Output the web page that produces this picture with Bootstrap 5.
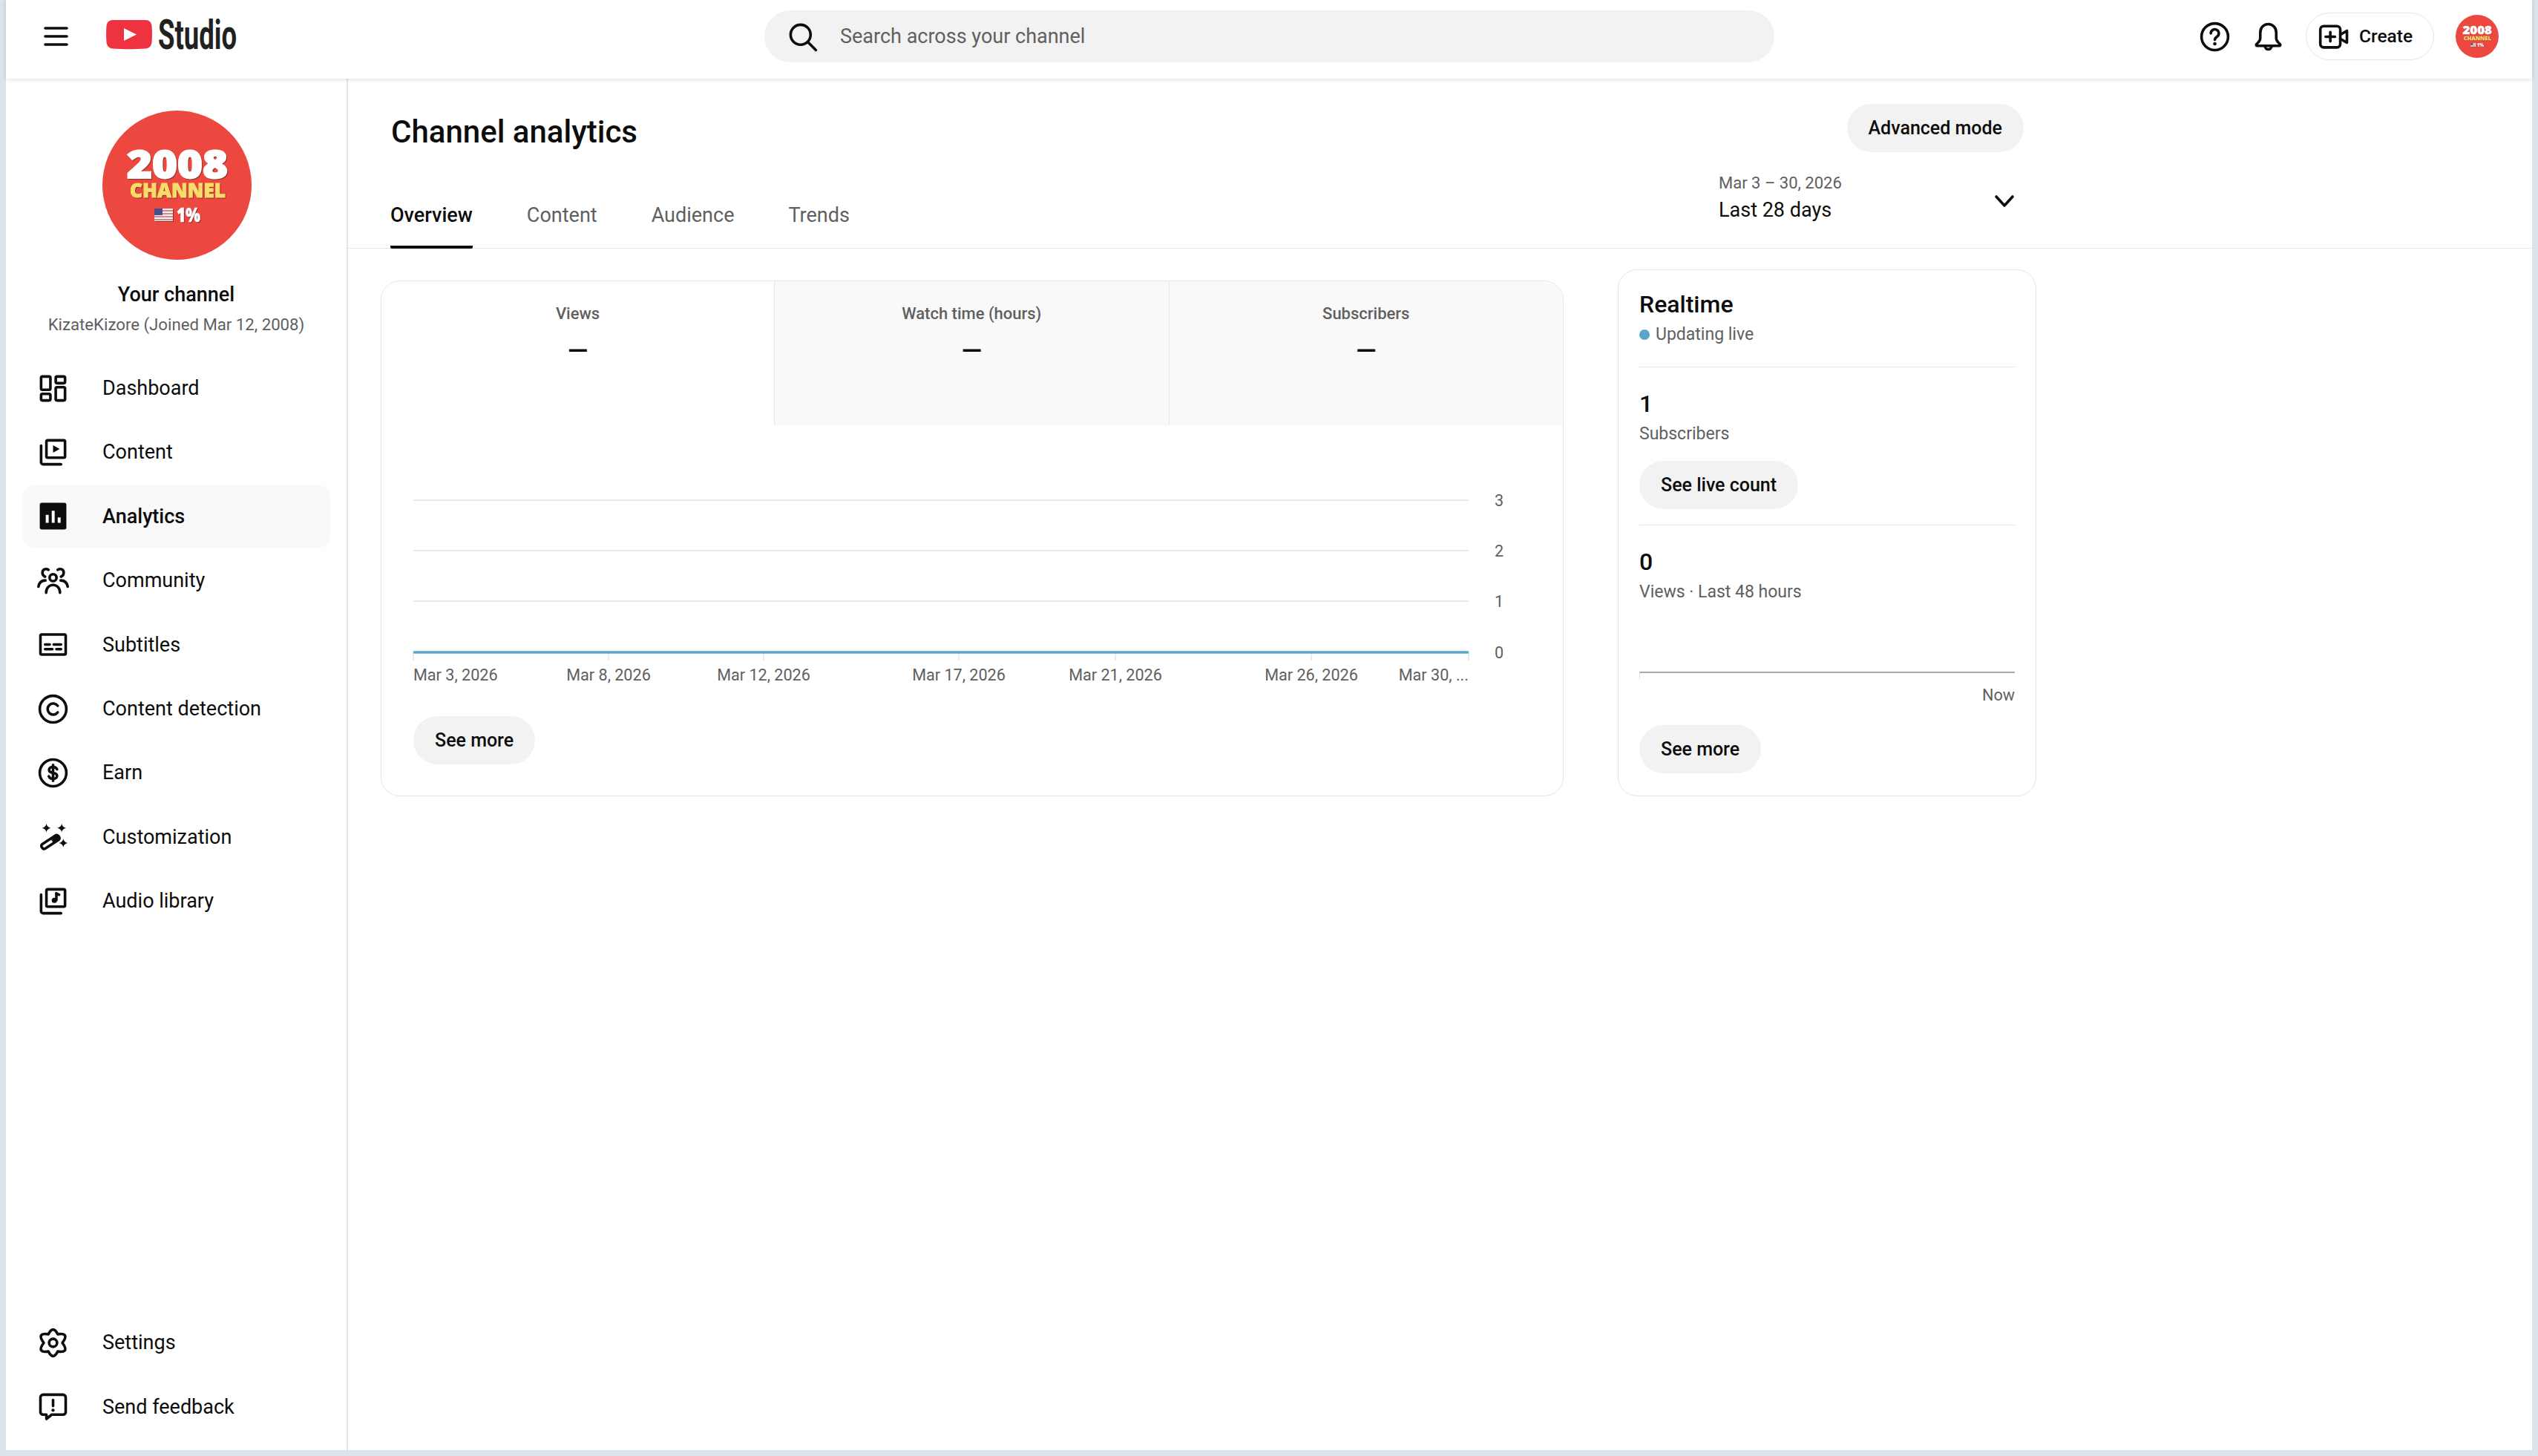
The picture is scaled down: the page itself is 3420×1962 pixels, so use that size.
<!DOCTYPE html>
<html lang="en">
<head>
    <meta charset="UTF-8">
    <meta name="viewport" content="width=device-width, initial-scale=1.0">
    <title>Channel analytics - YouTube Studio</title>
    <link href="https://cdn.jsdelivr.net/npm/bootstrap@5.3.0/dist/css/bootstrap.min.css" rel="stylesheet">
    <style>
        html, body {
            height: 100%;
        }
        body {
            background-color: #dbe3eb;
            padding: 0 8px 8px;
            font-family: Roboto, "Liberation Sans", sans-serif;
            color: #0d0d0d;
            overflow: hidden;
        }
        .app-shell {
            height: 100%;
            background: #fff;
            display: flex;
            flex-direction: column;
        }
        .icon {
            width: 43px;
            height: 43px;
            flex: none;
            fill: none;
            stroke: #0d0d0d;
            stroke-width: 2;
            stroke-linecap: round;
            stroke-linejoin: round;
        }
        .solid {
            fill: #0d0d0d;
            stroke: none;
        }

        /* top bar */
        .top-bar {
            height: 106px;
            flex: none;
            padding: 0 45px 8px 51px;
            background: #fff;
            box-shadow: 0 1px 6px rgba(0,0,0,.14);
            position: relative;
            z-index: 2;
        }
        .burger {
            width: 33px;
            height: 26px;
            flex: none;
            stroke: #0d0d0d;
            stroke-width: 3.6;
            stroke-linecap: round;
        }
        .yt-logo {
            width: 240px;
            height: 50px;
            margin-left: 51px;
            flex: none;
            overflow: visible;
        }
        .logo-word {
            font-family: Roboto, sans-serif;
            font-weight: 700;
            font-size: 55px;
            fill: #212121;
        }
        .search-box {
            width: 1361px;
            height: 70px;
            background: #f2f2f2;
            border-radius: 35px;
            margin-left: 647px;
            padding-left: 30px;
            flex: none;
        }
        .search-box .form-control {
            background: transparent;
            border: 0;
            box-shadow: none;
            font-size: 27px;
            padding: 0 0 0 29px;
            color: #606060;
        }
        .search-box .form-control::placeholder {
            color: #606060;
        }
        .head-tools {
            margin-left: auto;
            gap: 29px;
        }
        .create-pill {
            height: 64px;
            width: 173px;
            border: 1.5px solid #e5e5e5;
            border-radius: 32px;
            padding: 0 0 0 16px;
            font-size: 24.5px;
            font-weight: 500;
            color: #0d0d0d;
            gap: 12px;
        }
        .head-avatar {
            width: 58px;
            height: 58px;
            flex: none;
        }

        /* sidebar */
        .app-body {
            flex: 1;
            min-height: 0;
        }
        .side-nav {
            width: 461px;
            flex: none;
            border-right: 2px solid #e5e5e5;
            padding: 43px 22px 15px;
        }
        .side-avatar {
            width: 201px;
            height: 201px;
            display: block;
            flex: none;
            margin-left: calc(50% - 99.5px);
        }
        .side-name {
            font-size: 27px;
            font-weight: 500;
            line-height: 36px;
            margin-top: 29px;
        }
        .side-sub {
            font-size: 22.2px;
            line-height: 30px;
            color: #606060;
            margin: 7px -10px 28px;
            white-space: nowrap;
        }
        .side-nav .nav-link {
            height: 86.4px;
            padding: 0 0 0 20px;
            border-radius: 18px;
            color: #0d0d0d;
            font-size: 27px;
            gap: 45px;
        }
        .side-nav .nav-link.active {
            background: #f9f9f9;
            font-weight: 500;
        }

        /* main */
        .main-pane {
            flex: 1;
            min-width: 0;
        }
        .page-head {
            height: 229px;
            padding: 34px 0 0 57px;
            border-bottom: 1.5px solid #e5e5e5;
        }
        .head-inner {
            width: 2201px;
        }
        .title-row {
            height: 92px;
        }
        .page-title {
            font-size: 42px;
            font-weight: 500;
            line-height: 72px;
            margin: 2px 0 0 1px;
        }
        .soft-pill {
            height: 65px;
            padding: 0 29px;
            background: #f2f2f2;
            border: 0;
            border-radius: 33px;
            font-size: 25px;
            font-weight: 500;
            color: #0d0d0d;
            display: inline-flex;
            align-items: center;
        }
        .tab-row {
            height: 103px;
        }
        .page-tabs {
            gap: 73px;
        }
        .page-tabs .nav-link {
            padding: 40px 0 22px 0;
            font-size: 27px;
            line-height: 36px;
            color: #606060;
            border-bottom: 4px solid transparent;
        }
        .page-tabs .nav-link.active {
            color: #0d0d0d;
            font-weight: 500;
            border-bottom-color: #0d0d0d;
            border-radius: 0 0 2px 2px;
        }
        .date-pick {
            width: 411px;
            padding-right: 12px;
        }
        .date-range {
            font-size: 22px;
            line-height: 30px;
            color: #606060;
        }
        .date-label {
            font-size: 27px;
            line-height: 36px;
            margin-top: 3px;
        }
        .date-chevron {
            width: 28px;
            height: 20px;
            fill: none;
            stroke: #0d0d0d;
            stroke-width: 3.6;
            stroke-linecap: round;
            stroke-linejoin: round;
            margin-bottom: 20px;
        }
        .page-cards {
            padding-left: 44px;
        }
        .panel {
            border: 1.5px solid #e5e5e5;
            border-radius: 26px;
            background: #fff;
            overflow: hidden;
            flex: none;
        }
        .views-panel {
            width: 1594px;
            height: 695px;
            margin-top: 43px;
        }
        .metric-tab {
            flex: 1;
            height: 194px;
            padding-top: 29px;
            text-align: center;
            background: #f9f9f9;
            border-left: 1.5px solid #e5e5e5;
        }
        .metric-tab.on {
            flex: none;
            width: 529px;
            background: #fff;
            border-left: 0;
        }
        .metric-name {
            font-size: 22px;
            font-weight: 500;
            line-height: 30px;
            color: #606060;
        }
        .metric-value {
            font-size: 36px;
            font-weight: 500;
            line-height: 40px;
            margin-top: 15px;
        }
        .views-chart {
            display: block;
            width: 1591px;
            height: 385px;
        }
        .views-chart text {
            font-family: Roboto, sans-serif;
            font-size: 21.6px;
            fill: #606060;
        }
        .chart-foot {
            margin: 7px 0 0 43px;
        }
        .realtime-panel {
            width: 564px;
            height: 710px;
            margin: 28px 0 0 73px;
            padding: 26px 28px 0;
        }
        .rt-title {
            font-size: 32px;
            font-weight: 500;
            line-height: 40px;
        }
        .rt-sub {
            font-size: 23px;
            line-height: 30px;
            color: #606060;
            margin-top: 6px;
        }
        .live-dot {
            width: 14px;
            height: 14px;
            border-radius: 50%;
            background: #5aa7cc;
            margin-right: 8px;
        }
        .rt-rule {
            border-top: 1.5px solid #e5e5e5;
        }
        .rt-first {
            margin-top: 28px;
        }
        .rt-second {
            margin-top: 21px;
        }
        .rt-btn {
            margin-top: 21px;
        }
        .rt-more {
            margin-top: 25px;
        }
        .rt-count {
            font-size: 32px;
            font-weight: 500;
            line-height: 40px;
            margin-top: 29px;
        }
        .spark-axis {
            height: 10px;
            margin-top: 92px;
            border-top: 2px solid #a8a8a8;
            border-left: 1px solid #ddd;
        }
        .spark-now {
            font-size: 21.6px;
            line-height: 30px;
            color: #606060;
            text-align: right;
            margin-top: 7px;
        }

        /* channel picture */
        .pic-year {
            font-family: "Open Sans", sans-serif;
            font-weight: 800;
            font-size: 52px;
            fill: #fff;
            stroke: #fff;
            stroke-width: 2;
        }
        .pic-word {
            font-family: "Open Sans", sans-serif;
            font-weight: 800;
            font-size: 26px;
            fill: #f8dc68;
            stroke: #f8dc68;
            stroke-width: 1;
        }
        .pic-pct {
            font-family: "Open Sans", sans-serif;
            font-weight: 800;
            font-size: 26px;
            fill: #fff;
            stroke: #fff;
            stroke-width: .6;
        }
        .pic-shade {
            filter: drop-shadow(1.2px 1.4px 0 #97302b);
        }
    </style>
</head>
<body>
    <div class="app-shell">
        <header class="top-bar d-flex align-items-center">
            <svg class="burger" viewBox="0 0 33 26"><path d="M2 2h29M2 13h29M2 24h29"/></svg>
            <svg class="yt-logo" viewBox="0 0 240 50">
                <path d="M9 3h44c5 0 8 3 8.500 8 .6 7 .6 15 0 22-.5 5-3.500 8-8.500 8.500-14 1-30 1-44 0C4 41 1 38 .5 33c-.6-7-.6-15 0-22C1 6 4 3 9 3z" fill="#ee3240"/>
                <path d="M24 14l17 8.500-17 8.500z" fill="#fff"/>
                <text class="logo-word" x="70" y="42" textLength="106" lengthAdjust="spacingAndGlyphs">Studio</text>
            </svg>
            <form class="search-box d-flex align-items-center">
                <svg class="icon" viewBox="0 0 24 24"><circle cx="10.500" cy="10.500" r="7.500"/><path d="M16 16l6 6"/></svg>
                <input class="form-control" type="text" placeholder="Search across your channel">
            </form>
            <div class="head-tools d-flex align-items-center">
                <svg class="icon" viewBox="0 0 24 24"><circle cx="12" cy="12" r="10"/><path d="M9 9.500a3 3 0 1 1 4.600 2.500c-1 .7-1.600 1.200-1.600 2.300"/><circle class="solid" cx="12" cy="17.300" r="1.300"/></svg>
                <svg class="icon" viewBox="0 0 24 24"><path d="M12 2.500c-3.500 0-6 2.800-6 6.500v4c0 1.500-1 3-2.800 4.600-.5.500-.2 1.200.5 1.200h16.600c.7 0 1-.7.5-1.200C18.900 16 18 14.500 18 13V9c0-3.700-2.500-6.500-6-6.500z"/><path d="M9.500 19a2.500 2.500 0 0 0 5 0"/></svg>
                <button class="btn create-pill d-flex align-items-center" type="button">
                    <svg class="icon" viewBox="0 0 24 24"><rect x="1.500" y="4" width="15" height="16" rx="2.500"/><path d="M16.500 10.500l5-3v9l-5-3M9 8.500v7M5.500 12h7"/></svg>
                    Create
                </button>
                <svg class="head-avatar" viewBox="0 0 201 201">
                    <circle cx="100.500" cy="100.500" r="100.500" fill="#ec483f"/>
                    <g class="pic-shade">
                        <text class="pic-year" x="33" y="91" textLength="136" lengthAdjust="spacingAndGlyphs">2008</text>
                        <text class="pic-word" x="37" y="117" textLength="129" lengthAdjust="spacingAndGlyphs">CHANNEL</text>
                        <text class="pic-pct" x="100" y="150" textLength="32" lengthAdjust="spacingAndGlyphs">1%</text>
                        <rect x="70" y="132" width="25" height="17" fill="#f4eeee"/>
                        <path d="M70 135h25M70 139h25M70 143h25M70 147h25" stroke="#c66a70" stroke-width="1.600"/>
                        <rect x="70" y="132" width="11" height="9" fill="#47508a"/>
                    </g>
                </svg>
            </div>
        </header>

        <div class="app-body d-flex">
            <aside class="side-nav d-flex flex-column">
                <svg class="side-avatar" viewBox="0 0 201 201">
                    <circle cx="100.500" cy="100.500" r="100.500" fill="#ec483f"/>
                    <g class="pic-shade">
                        <text class="pic-year" x="33" y="91" textLength="136" lengthAdjust="spacingAndGlyphs">2008</text>
                        <text class="pic-word" x="37" y="117" textLength="129" lengthAdjust="spacingAndGlyphs">CHANNEL</text>
                        <text class="pic-pct" x="100" y="150" textLength="32" lengthAdjust="spacingAndGlyphs">1%</text>
                        <rect x="70" y="132" width="25" height="17" fill="#f4eeee"/>
                        <path d="M70 135h25M70 139h25M70 143h25M70 147h25" stroke="#c66a70" stroke-width="1.600"/>
                        <rect x="70" y="132" width="11" height="9" fill="#47508a"/>
                    </g>
                </svg>
                <div class="text-center side-name">Your channel</div>
                <div class="text-center side-sub">KizateKizore (Joined Mar 12, 2008)</div>
                <nav class="nav flex-column flex-grow-1">
                    <a class="nav-link d-flex align-items-center" href="#">
                        <svg class="icon" viewBox="0 0 24 24"><rect x="3" y="3" width="7" height="10" rx="1"/><rect x="3" y="16" width="7" height="5" rx="1"/><rect x="14" y="3" width="7" height="5" rx="1"/><rect x="14" y="11" width="7" height="10" rx="1"/></svg>
                        Dashboard
                    </a>
                    <a class="nav-link d-flex align-items-center" href="#">
                        <svg class="icon" viewBox="0 0 24 24"><rect x="7" y="3" width="14" height="13" rx="1"/><path d="M3 7v12.500a1.500 1.500 0 0 0 1.500 1.500H18"/><path class="solid" d="M12 6.700l5 2.800-5 2.800z"/></svg>
                        Content
                    </a>
                    <a class="nav-link active d-flex align-items-center" href="#">
                        <svg class="icon" viewBox="0 0 24 24"><rect class="solid" x="2" y="2" width="20" height="20" rx="1.500"/><path fill="#fff" stroke="none" d="M6.500 11h2.200v6H6.500zM11 8h2.200v9H11zM15.500 13h2.200v4h-2.200z"/></svg>
                        Analytics
                    </a>
                    <a class="nav-link d-flex align-items-center" href="#">
                        <svg class="icon" viewBox="0 0 24 24"><circle cx="12" cy="9.700" r="2.600"/><path d="M6.800 21c0-3.400 2.200-5.800 5.200-5.800s5.200 2.400 5.200 5.800"/><path d="M8.500 3.800C6.500 2.500 4 3.500 4 6c0 1.500.9 2.500 2 3M1 16.500c.5-3 2.500-4.700 5.300-4.700"/><path d="M15.500 3.800C17.500 2.500 20 3.500 20 6c0 1.500-.9 2.500-2 3M23 16.500c-.5-3-2.500-4.700-5.300-4.700"/></svg>
                        Community
                    </a>
                    <a class="nav-link d-flex align-items-center" href="#">
                        <svg class="icon" viewBox="0 0 24 24"><rect x="2.500" y="4.500" width="19" height="15" rx="1"/><path d="M6 12h3.500M12.500 12H18M6 15.500h5.500M14.500 15.500H18"/></svg>
                        Subtitles
                    </a>
                    <a class="nav-link d-flex align-items-center" href="#">
                        <svg class="icon" viewBox="0 0 24 24"><circle cx="12" cy="12" r="10"/><path d="M15.500 9.500a4.200 4.200 0 1 0 0 5"/></svg>
                        Content detection
                    </a>
                    <a class="nav-link d-flex align-items-center" href="#">
                        <svg class="icon" viewBox="0 0 24 24"><circle cx="12" cy="12" r="10"/><path d="M15 9.300C14.500 8 13.300 7.500 12 7.500c-1.700 0-3 .9-3 2.300s1.200 1.900 3 2.200 3 .9 3 2.200-1.300 2.300-3 2.300c-1.500 0-2.700-.7-3.200-1.900M12 6v12"/></svg>
                        Earn
                    </a>
                    <a class="nav-link d-flex align-items-center" href="#">
                        <svg class="icon" viewBox="0 0 24 24"><g transform="rotate(-33 10 16)"><rect x="2.500" y="14" width="15" height="4" rx="1.500"/><rect class="solid" x="11.500" y="14" width="6" height="4"/></g><path class="solid" d="M7 2.300q.5 2.700 3.300 3.200-2.800.5-3.300 3.200-.5-2.700-3.300-3.200 2.800-.5 3.300-3.200zM18.500 2.300q.5 2.700 3.300 3.200-2.800.5-3.300 3.200-.5-2.700-3.300-3.200 2.800-.5 3.300-3.200zM19.700 13.500q.5 2.700 3.300 3.200-2.800.5-3.300 3.200-.5-2.700-3.300-3.200 2.800-.5 3.300-3.200z"/></svg>
                        Customization
                    </a>
                    <a class="nav-link d-flex align-items-center" href="#">
                        <svg class="icon" viewBox="0 0 24 24"><rect x="7" y="3" width="14" height="13" rx="1"/><path d="M3 7v12.500a1.500 1.500 0 0 0 1.500 1.500H18"/><path d="M14.500 6v5"/><circle class="solid" cx="13" cy="11.300" r="2"/><path d="M14.500 6.200l2 .8"/></svg>
                        Audio library
                    </a>
                    <a class="nav-link d-flex align-items-center mt-auto" href="#">
                        <svg class="icon" viewBox="0 0 24 24"><path d="M8.500 5.500Q12-1.500 15.500 5.500 24.750 4.250 19 12 24.750 19.750 15.500 18.500 12 25.500 8.500 18.500-.75 19.750 5 12-.75 4.250 8.500 5.500z"/><circle cx="12" cy="12" r="3"/></svg>
                        Settings
                    </a>
                    <a class="nav-link d-flex align-items-center" href="#">
                        <svg class="icon" viewBox="0 0 24 24"><path d="M4.500 3h15a2 2 0 0 1 2 2v11a2 2 0 0 1-2 2H11l-4 3.200V18H4.500a2 2 0 0 1-2-2V5a2 2 0 0 1 2-2z"/><path d="M12 7v4.500"/><circle class="solid" cx="12" cy="14.700" r="1.200"/></svg>
                        Send feedback
                    </a>
                </nav>
            </aside>

            <main class="main-pane">
                <div class="page-head">
                    <div class="head-inner">
                        <div class="title-row d-flex justify-content-between align-items-start">
                            <h1 class="page-title">Channel analytics</h1>
                            <button class="soft-pill" type="button">Advanced mode</button>
                        </div>
                        <div class="tab-row d-flex justify-content-between">
                            <nav class="nav page-tabs">
                                <a class="nav-link active" href="#">Overview</a>
                                <a class="nav-link" href="#">Content</a>
                                <a class="nav-link" href="#">Audience</a>
                                <a class="nav-link" href="#">Trends</a>
                            </nav>
                            <div class="date-pick d-flex justify-content-between align-items-end align-self-start">
                                <div>
                                    <div class="date-range">Mar 3 – 30, 2026</div>
                                    <div class="date-label">Last 28 days</div>
                                </div>
                                <svg class="date-chevron" viewBox="0 0 28 20"><path d="M3 4l11 12L25 4"/></svg>
                            </div>
                        </div>
                    </div>
                </div>

                <div class="page-cards d-flex align-items-start">
                    <section class="panel views-panel">
                        <div class="d-flex">
                            <div class="metric-tab on">
                                <div class="metric-name">Views</div>
                                <div class="metric-value">—</div>
                            </div>
                            <div class="metric-tab">
                                <div class="metric-name">Watch time (hours)</div>
                                <div class="metric-value">—</div>
                            </div>
                            <div class="metric-tab">
                                <div class="metric-name">Subscribers</div>
                                <div class="metric-value">—</div>
                            </div>
                        </div>
                        <svg class="views-chart" viewBox="0 0 1591 385">
                            <path d="M43 101H1465M43 169H1465M43 237H1465" stroke="#e8e8e8" stroke-width="2"/>
                            <path d="M43 306v11M306 306v11M515 306v11M778 306v11M989 306v11M1253 306v11M1465 306v11" stroke="#e5e5e5" stroke-width="1.500"/>
                            <path d="M43 306H1465" stroke="#5aa7cc" stroke-width="3.500"/>
                            <text x="1506" y="109" text-anchor="middle">3</text>
                            <text x="1506" y="177" text-anchor="middle">2</text>
                            <text x="1506" y="245" text-anchor="middle">1</text>
                            <text x="1506" y="314" text-anchor="middle">0</text>
                            <text x="43" y="344">Mar 3, 2026</text>
                            <text x="306" y="344" text-anchor="middle">Mar 8, 2026</text>
                            <text x="515" y="344" text-anchor="middle">Mar 12, 2026</text>
                            <text x="778" y="344" text-anchor="middle">Mar 17, 2026</text>
                            <text x="989" y="344" text-anchor="middle">Mar 21, 2026</text>
                            <text x="1253" y="344" text-anchor="middle">Mar 26, 2026</text>
                            <text x="1465" y="344" text-anchor="end">Mar 30, ...</text>
                        </svg>
                        <div class="chart-foot">
                            <button class="soft-pill" type="button">See more</button>
                        </div>
                    </section>

                    <section class="panel realtime-panel">
                        <div class="rt-title">Realtime</div>
                        <div class="rt-sub d-flex align-items-center"><span class="live-dot"></span>Updating live</div>
                        <div class="rt-rule rt-first"></div>
                        <div class="rt-count">1</div>
                        <div class="rt-sub">Subscribers</div>
                        <button class="soft-pill rt-btn" type="button">See live count</button>
                        <div class="rt-rule rt-second"></div>
                        <div class="rt-count">0</div>
                        <div class="rt-sub">Views · Last 48 hours</div>
                        <div class="spark-axis"></div>
                        <div class="spark-now">Now</div>
                        <button class="soft-pill rt-more" type="button">See more</button>
                    </section>
                </div>
            </main>
        </div>
    </div>
</body>
</html>
